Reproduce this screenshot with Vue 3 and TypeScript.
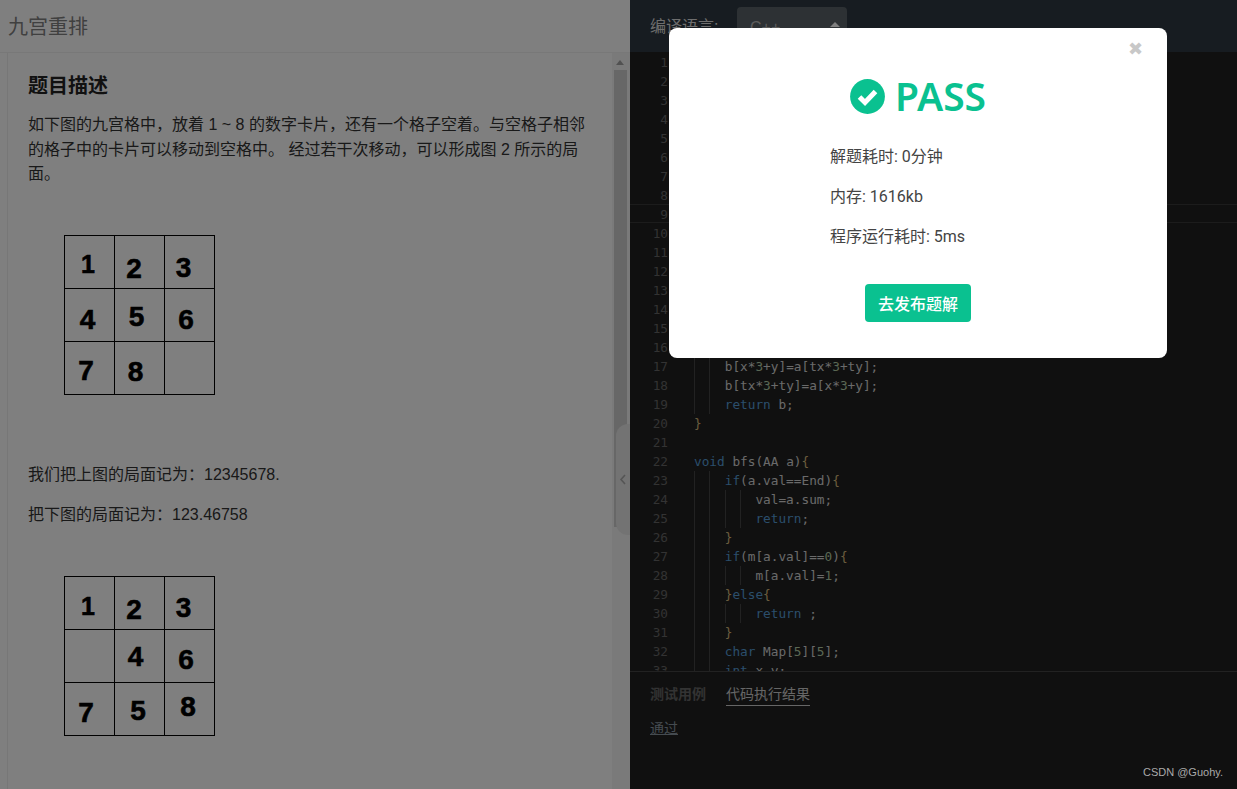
<script setup lang="ts">
interface Digit { t: string; x: number; y: number; s?: number }
const boardA: Digit[] = [
  { t: '1', x: 88, y: 38, s: 25 }, { t: '2', x: 134, y: 43 }, { t: '3', x: 183.5, y: 41.5 },
  { t: '4', x: 87.5, y: 94 }, { t: '5', x: 136.5, y: 91 }, { t: '6', x: 186, y: 94 },
  { t: '7', x: 86, y: 145 }, { t: '8', x: 135.5, y: 146 },
]
const boardB: Digit[] = [
  { t: '1', x: 88, y: 39, s: 25 }, { t: '2', x: 134, y: 43 }, { t: '3', x: 183.5, y: 41 },
  { t: '4', x: 135.5, y: 90 }, { t: '6', x: 186, y: 93 },
  { t: '7', x: 86, y: 145.5 }, { t: '5', x: 138, y: 144 }, { t: '8', x: 188, y: 140 },
]
const boards = [boardA, boardB]
interface Tok { c: string; t: string }
const k = (t: string): Tok => ({ c: 'kw', t })
const p = (t: string): Tok => ({ c: 'pl', t })
const n = (t: string): Tok => ({ c: 'num', t })
const b = (t: string): Tok => ({ c: 'br', t })
const code: { no: number; guides: number; toks: Tok[] }[] = []
for (let i = 1; i <= 16; i++) code.push({ no: i, guides: 0, toks: [] })
code.push(
  { no: 17, guides: 2, toks: [p('    b[x*'), n('3'), p('+y]=a[tx*'), n('3'), p('+ty];')] },
  { no: 18, guides: 2, toks: [p('    b[tx*'), n('3'), p('+ty]=a[x*'), n('3'), p('+y];')] },
  { no: 19, guides: 2, toks: [k('    return'), p(' b;')] },
  { no: 20, guides: 0, toks: [b('}')] },
  { no: 21, guides: 0, toks: [] },
  { no: 22, guides: 0, toks: [k('void'), p(' bfs(AA a)'), b('{')] },
  { no: 23, guides: 2, toks: [k('    if'), p('(a.val==End)'), b('{')] },
  { no: 24, guides: 4, toks: [p('        val=a.sum;')] },
  { no: 25, guides: 4, toks: [k('        return'), p(';')] },
  { no: 26, guides: 2, toks: [b('    }')] },
  { no: 27, guides: 2, toks: [k('    if'), p('(m[a.val]=='), n('0'), p(')'), b('{')] },
  { no: 28, guides: 4, toks: [p('        m[a.val]='), n('1'), p(';')] },
  { no: 29, guides: 2, toks: [b('    }'), k('else'), b('{')] },
  { no: 30, guides: 4, toks: [k('        return'), p(' ;')] },
  { no: 31, guides: 2, toks: [b('    }')] },
  { no: 32, guides: 2, toks: [k('    char'), p(' Map['), n('5'), p(']['), n('5'), p('];')] },
  { no: 33, guides: 2, toks: [k('    int'), p(' x,y;')] },
)
const guideLeft = (g: number): string => `${26 + (g - 1) * 15.35}px`
</script>

<template>
  <div class="page">
    <section class="left">
      <header class="title">九宫重排</header>
      <div class="scroller">
        <article class="desc">
          <h2>题目描述</h2>
          <p>如下图的九宫格中，放着 1 ~ 8 的数字卡片，还有一个格子空着。与空格子相邻的格子中的卡片可以移动到空格中。 经过若干次移动，可以形成图 2 所示的局面。</p>
          <svg class="board first" width="152" height="161" viewBox="64 0 152 161">
            <g stroke="#000" stroke-width="1" fill="none" shape-rendering="crispEdges">
              <rect x="64.5" y="0.5" width="150" height="159" />
              <path d="M114.5 0V160M164.5 0V160M64 53.5H215M64 106.5H215" />
            </g>
            <text v-for="d in boards[0]" :key="d.t" :x="d.x" :y="d.y" :font-size="d.s ?? 28" class="digit">{{ d.t }}</text>
          </svg>
          <p class="note">我们把上图的局面记为：12345678.</p>
          <p class="note second">把下图的局面记为：123.46758</p>
          <svg class="board last" width="152" height="161" viewBox="64 0 152 161">
            <g stroke="#000" stroke-width="1" fill="none" shape-rendering="crispEdges">
              <rect x="64.5" y="0.5" width="150" height="159" />
              <path d="M114.5 0V160M164.5 0V160M64 53.5H215M64 106.5H215" />
            </g>
            <text v-for="d in boards[1]" :key="d.t" :x="d.x" :y="d.y" :font-size="d.s ?? 28" class="digit">{{ d.t }}</text>
          </svg>
        </article>
        <div class="scrollbar">
          <span class="arrow"></span>
          <span class="thumb"></span>
        </div>
      </div>
    </section>

    <section class="right">
      <header class="toolbar">
        <span class="lang-label">编译语言:</span>
        <div class="lang-select">
          <span>C++</span>
          <span class="carets"></span>
        </div>
      </header>
      <div class="editor">
        <div v-for="line in code" :key="line.no" class="line" :class="{ active: line.no === 9 }">
          <span class="no">{{ line.no }}</span>
          <span class="src">
            <i v-for="g in line.guides" :key="g" class="guide" :style="{ left: guideLeft(g) }"></i>
            <span v-for="(tok, i) in line.toks" :key="i" :class="tok.c">{{ tok.t }}</span>
          </span>
        </div>
      </div>
      <footer class="console">
        <nav class="tabs">
          <span class="tab">测试用例</span>
          <span class="tab on">代码执行结果</span>
        </nav>
        <a class="result">通过</a>
      </footer>
    </section>

    <button class="collapse" type="button" aria-label="collapse">
      <svg width="8" height="11" viewBox="0 0 8 11"><path d="M6 1L2 5.5L6 10" fill="none" stroke="#aaa" stroke-width="1.6" /></svg>
    </button>

    <div class="overlay"></div>

    <div class="modal">
      <span class="close">✖</span>
      <div class="pass">
        <svg width="35" height="35" viewBox="0 0 35 35">
          <circle cx="17.5" cy="17.5" r="17.4" fill="#0ac190" />
          <path d="M9.5 18l5.5 5.5L25.5 12.5" fill="none" stroke="#fff" stroke-width="5" />
        </svg>
        <span>PASS</span>
      </div>
      <div class="stats">
        <p>解题耗时: 0分钟</p>
        <p>内存: 1616kb</p>
        <p>程序运行耗时: 5ms</p>
      </div>
      <button class="publish" type="button">去发布题解</button>
    </div>

    <span class="watermark">CSDN @Guohy.</span>
  </div>
</template>

<style>
html, body { margin: 0; background: #111; overflow: hidden; }
</style>

<style scoped>
.page {
  position: relative;
  display: flex;
  width: 1237px;
  height: 789px;
  overflow: hidden;
  font-family: "Liberation Sans", "Noto Sans CJK SC", sans-serif;
}
.left {
  width: 630px;
  flex: none;
  display: flex;
  flex-direction: column;
  background: #fff;
}
.title {
  height: 53px;
  flex: none;
  box-sizing: border-box;
  padding: 12px 0 0 8px;
  font-size: 20px;
  line-height: 30px;
  color: #808080;
  border-bottom: 1px solid #f0f0f0;
  background: #fff;
}
.scroller {
  flex: 1;
  display: flex;
  min-height: 0;
  padding-left: 7px;
}
.desc {
  flex: 1;
  border-left: 1px solid #eee;
  padding: 20px 27px 0 20px;
  color: #333;
  overflow: hidden;
}
h2 {
  margin: 0;
  font-size: 20px;
  line-height: 26px;
  font-weight: 700;
  color: #222;
}
p { margin: 0; }
.desc > p {
  font-size: 16px;
  line-height: 24.5px;
  margin-top: 14px;
}
.board { display: block; margin-left: 36px; }
.board.first { margin-top: 48px; }
.desc > p.note { margin-top: 67px; }
.desc > p.note.second { margin-top: 16px; }
.board.last { margin-top: 48px; }
.digit {
  font-family: "Liberation Sans", sans-serif;
  font-weight: 700;
  text-anchor: middle;
  fill: #000;
  stroke: #000;
  stroke-width: .6px;
}
.scrollbar {
  width: 18px;
  flex: none;
  background: #f5f5f5;
  display: flex;
  flex-direction: column;
  align-items: flex-start;
}
.arrow {
  margin: 7px 0 0 4px;
  width: 0;
  height: 0;
  border-left: 4px solid transparent;
  border-right: 4px solid transparent;
  border-bottom: 5px solid #a3a3a3;
}
.thumb {
  margin: 5px 0 0 2px;
  width: 13px;
  height: 457px;
  background: #cfcfcf;
}
.right {
  flex: 1;
  min-width: 0;
  display: flex;
  flex-direction: column;
  background: #202020;
}
.toolbar {
  height: 52px;
  flex: none;
  display: flex;
  align-items: center;
  padding-left: 20px;
  background: #2e3842;
  color: #fff;
}
.lang-label { font-size: 16px; width: 87px; color: #ddd; margin-top: -2px; }
.lang-select {
  width: 110px;
  height: 42px;
  margin-top: 4px;
  box-sizing: border-box;
  border-radius: 4px;
  background: #5a6268;
  display: flex;
  align-items: center;
  justify-content: space-between;
  padding: 0 7px 0 13px;
  font-size: 16px;
  color: #bbb;
}
.carets {
  display: flex;
  flex-direction: column;
  gap: 2px;
}
.carets::before,
.carets::after {
  content: "";
  display: block;
  width: 0;
  height: 0;
  border-left: 5px solid transparent;
  border-right: 5px solid transparent;
}
.carets::before { border-bottom: 5px solid #fff; }
.carets::after { border-top: 5px solid #fff; }
.editor {
  flex: 1;
  min-height: 0;
  padding-top: 1px;
  overflow: hidden;
  border-bottom: 1px solid #444;
  font-family: "DejaVu Sans Mono", monospace;
  font-size: 12.75px;
  line-height: 19px;
}
.line { position: relative; display: flex; height: 19px; }
.line.active::before {
  content: "";
  position: absolute;
  left: 0;
  right: 0;
  top: -1px;
  height: 17px;
  border-top: 1px solid #383838;
  border-bottom: 1px solid #383838;
}
.no {
  width: 38px;
  flex: none;
  text-align: right;
  color: #666;
}
.src {
  position: relative;
  padding-left: 26px;
  white-space: pre;
}
.guide {
  position: absolute;
  top: 0;
  bottom: 0;
  width: 1px;
  background: #444;
}
.pl { color: #d4d4d4; }
.kw { color: #569cd6; }
.num { color: #b5cea8; }
.br { color: #d7ba7d; }
.console {
  height: 117px;
  flex: none;
  box-sizing: border-box;
  padding: 12px 20px 0;
  background: #202020;
  font-family: "Liberation Sans", "Noto Sans CJK SC", sans-serif;
  font-size: 14px;
}
.tabs { display: flex; gap: 20px; }
.tab { color: #666; font-weight: 700; line-height: 20px; padding-bottom: 1px; }
.tab.on { color: #ccc; font-weight: 400; border-bottom: 1px solid #ccc; }
.result {
  display: inline-block;
  margin-top: 12px;
  color: #8a97a0;
  text-decoration: underline;
  line-height: 20px;
}
.collapse {
  position: absolute;
  left: 616px;
  top: 424px;
  width: 14px;
  height: 111px;
  padding: 0;
  border: 0;
  border-radius: 12px 0 0 12px;
  background: #e6e6e6;
  display: flex;
  align-items: center;
  justify-content: center;
}
.overlay {
  position: absolute;
  inset: 0;
  background: rgba(0, 0, 0, .5);
}
.modal {
  position: absolute;
  left: 669px;
  top: 28px;
  width: 498px;
  height: 330px;
  box-sizing: border-box;
  border-radius: 8px;
  background: #fff;
  display: flex;
  flex-direction: column;
  align-items: center;
  font-family: "Noto Sans", "Noto Sans CJK SC", sans-serif;
}
.close {
  position: absolute;
  right: 24px;
  top: 10px;
  font-size: 18px;
  line-height: 22px;
  color: #c8c8c8;
  font-family: "DejaVu Sans", sans-serif;
}
.pass {
  display: flex;
  align-items: center;
  gap: 10px;
  margin-top: 47px;
  height: 42px;
  color: #0ac190;
  font-size: 39px;
  font-weight: 600;
  line-height: 42px;
}
.stats {
  align-self: flex-start;
  margin-left: 161px;
  margin-top: 29px;
  font-family: Roboto, "Noto Sans CJK SC", sans-serif;
  font-size: 16px;
  line-height: 22px;
  color: #444;
}
.stats p { margin-bottom: 18px; }
.publish {
  margin-top: 18px;
  width: 106px;
  height: 38px;
  border: 0;
  border-radius: 4px;
  background: #0ac190;
  color: #fff;
  font-family: inherit;
  font-size: 16px;
  font-weight: 500;
}
.watermark {
  position: absolute;
  right: 14px;
  bottom: 10px;
  font-size: 11px;
  line-height: 14px;
  color: #aaa;
  font-family: "Liberation Sans", sans-serif;
}
</style>
